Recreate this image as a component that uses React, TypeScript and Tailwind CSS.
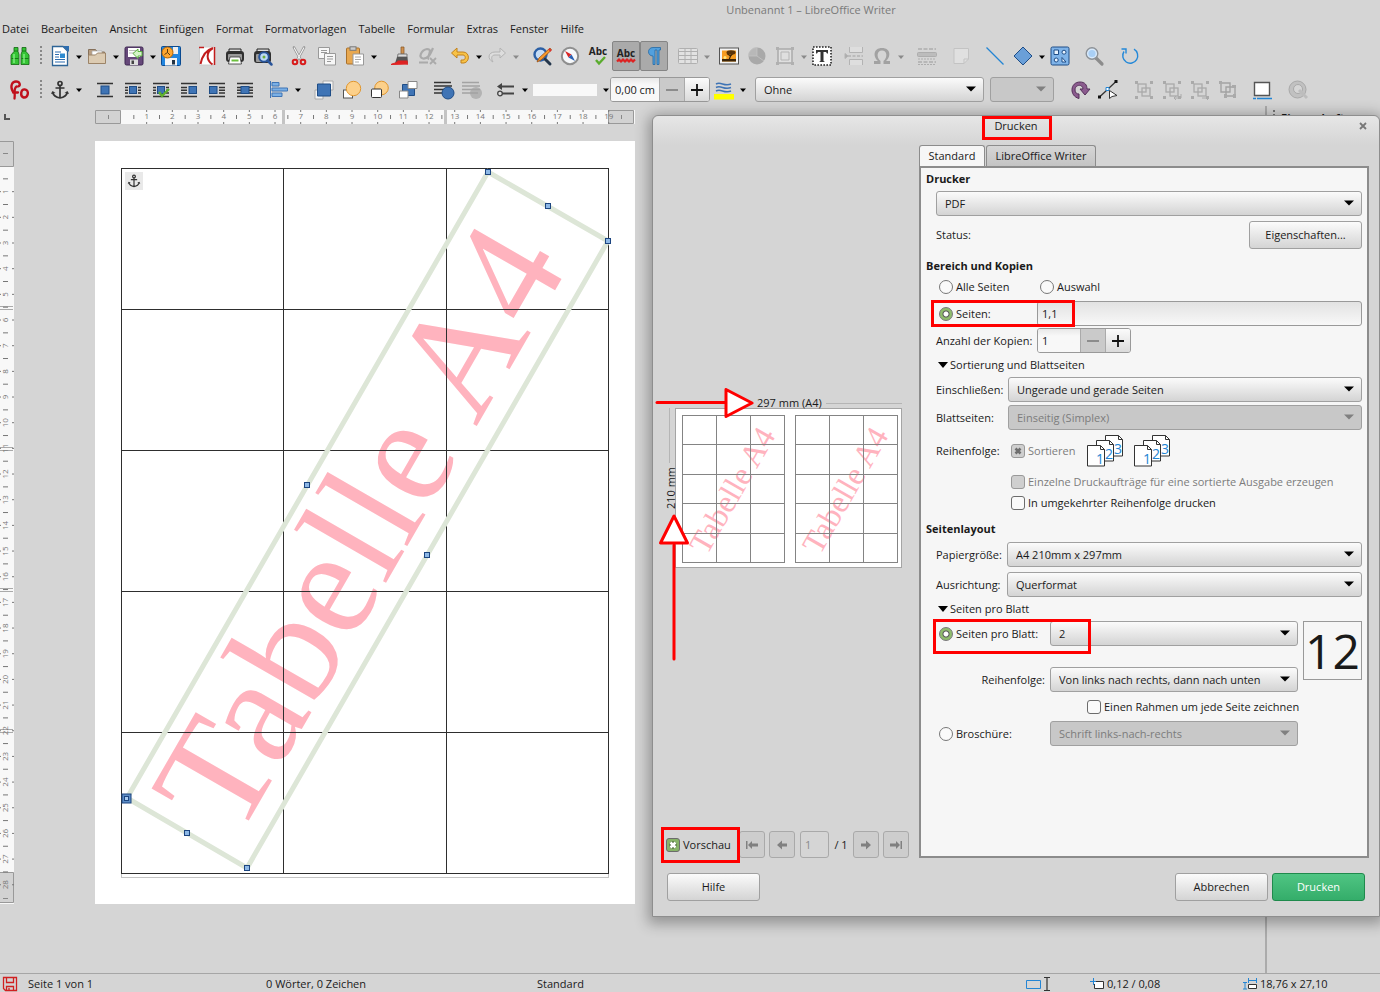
import React from 'react';
import clsx from 'clsx';

type IconName = keyof typeof ICONS;

const blue = '#3f74b5';
const navy = '#1f4d86';

/* 20x20 toolbar drawings */
const wrapLines = (left: boolean, right: boolean) => (
  <>
    <path d="M2 3.5h16M2 16.5h16" stroke="#333" strokeWidth="1.6" />
    {left && <path d="M2 7.5h3M2 10.2h3M2 13h3" stroke="#333" strokeWidth="1.4" />}
    {right && <path d="M15 7.5h3M15 10.2h3M15 13h3" stroke="#333" strokeWidth="1.4" />}
  </>
);

const groupShape = (
  <>
    <rect x="4" y="4" width="8" height="8" fill="none" stroke="#aaa" strokeWidth="1.3" />
    <rect x="8" y="8" width="8" height="8" fill="none" stroke="#aaa" strokeWidth="1.3" />
    <path d="M1 1h3v3H1zM16 1h3v3h-3zM1 16h3v3H1zM16 16h3v3h-3z" fill="#aaa" />
  </>
);

const ICONS = {
  binoculars: (
    <g fill="#35c435" stroke="#116611" strokeWidth="0.8">
      <path d="M4 1.5h4v4l1 3v10H1V9l3-3.5zM12 1.5h4v4L19 9v9.5h-8v-10l1-3z" />
      <path d="M1.5 12.5h7M11.5 12.5h7M4 5h4M12 5h4" fill="none" />
      <path d="M4 8v9M14 8v9" stroke="#8cf08c" strokeWidth="1.3" />
    </g>
  ),
  newDoc: (
    <>
      <path d="M2.5.5H13l4.5 4.5v14.5h-15z" fill="#fff" stroke="#2d6496" strokeWidth="1.3" />
      <path d="M13 0l6 0v6z" fill="#2d6db0" />
      <path d="M5 6h6M5 8.5h4M5 11h4M5 13.5h10M5 16h10" stroke="#2d6db0" strokeWidth="1.2" />
      <rect x="10" y="7.5" width="5" height="4.5" fill="#2d8ad0" />
    </>
  ),
  open: (
    <>
      <path d="M1.5 17V3.5h7l2 2.5h7V17z" fill="#b89d80" stroke="#85705a" />
      <path d="M5 5h10v6H5z" fill="#fff" stroke="#aaa" strokeWidth="0.7" />
      <path d="M1.5 17.5V9h7l2-2h8v10.5z" fill="#dccbb2" stroke="#9c8468" />
    </>
  ),
  save: (
    <>
      <rect x="1" y="1" width="18" height="18" rx="1.5" fill="#66487a" stroke="#3c2650" />
      <path d="M4 2h12v9H4z" fill="#fff" />
      <path d="M5 4.5h7M5 7h5" stroke="#bbb" />
      <path d="M6 13.5h8V19H6z" fill="#ddd" />
      <path d="M7.5 14.5H10V18H7.5z" fill="#444" />
      <path d="M9 7.500L14 3v2.500h4v4.500h-4v2.500z" fill="#d5f5c8" stroke="#5cb040" />
    </>
  ),
  saveRemote: (
    <>
      <rect x=".5" y=".5" width="19" height="19" rx="1" fill="#2286e0" stroke="#0a4a90" />
      <path d="M12 1h5v7h-5z" fill="#eee" />
      <path d="M4 12h12v7.5H4z" fill="#f4f4f4" />
      <path d="M11 14h3v4.5h-3z" fill="#234" />
      <circle cx="6.500" cy="6.500" r="5.5" fill="#ffa730" stroke="#b86200" />
      <path d="M6.5 3v3.500L3.500 8.500M6.500 6.500L9 9" stroke="#5b3a10" strokeWidth="1" fill="none" />
    </>
  ),
  pdf: (
    <>
      <path d="M2.5 1h15v18h-15z" fill="#fff" stroke="#ccc" />
      <path d="M2 1.5h5M17.500 1v18" stroke="#c21d1d" strokeWidth="1.5" />
      <path d="M16 2C9 4 5 11 3.500 18M15.500 2.500C9 6 9 14 15.500 18.500" fill="none" stroke="#c21d1d" strokeWidth="2" />
    </>
  ),
  print: (
    <>
      <path d="M4 3h12v5H4z" fill="#ddd" stroke="#222" />
      <rect x="1" y="5" width="18" height="11" rx="3" fill="#303030" />
      <rect x="3" y="8" width="14" height="6" rx="1" fill="#9a9a9a" />
      <path d="M5 11h10l1.5 7h-13z" fill="#fff" stroke="#333" strokeWidth="0.8" />
      <path d="M6.5 14.500h7" stroke="#6cbf3e" strokeWidth="2" />
    </>
  ),
  printPreview: (
    <>
      <path d="M4 3h12v5H4z" fill="#ddd" stroke="#222" />
      <rect x="1" y="5" width="17" height="12" rx="3" fill="#303030" />
      <rect x="3" y="8" width="13" height="8" rx="1" fill="#9a9a9a" />
      <circle cx="11" cy="11" r="4.8" fill="#bcd9f5" stroke="#28549a" strokeWidth="2" />
      <path d="M14.5 14.500l4 4" stroke="#28549a" strokeWidth="2.5" strokeLinecap="round" />
      <circle cx="11" cy="11" r="1.5" fill="#6cae3e" />
    </>
  ),
  cut: (
    <>
      <path d="M5 1.5l6.500 12M15 1.500L8.500 13.500" stroke="#8f8f8f" strokeWidth="2.6" strokeLinecap="round" />
      <path d="M5 1.5l6.500 12M15 1.500L8.500 13.500" stroke="#f5f5f5" strokeWidth="1.1" />
      <circle cx="6" cy="16" r="2.300" fill="none" stroke="#d81c1c" strokeWidth="2" />
      <circle cx="14" cy="16" r="2.300" fill="none" stroke="#d81c1c" strokeWidth="2" />
    </>
  ),
  copy: (
    <g fill="#f7f7f7" stroke="#999">
      <path d="M1.5 1.5h11v11h-11z" />
      <path d="M7.5 7.500h11V19h-11z" />
      <path d="M4 4.500h6M4 6.500h6M10 10.500h6M10 13h6M10 15.500h4" />
    </g>
  ),
  paste: (
    <>
      <rect x="1.5" y="2" width="13" height="16" rx="1" fill="#e8a850" stroke="#a9702a" />
      <rect x="5" y=".8" width="6" height="3.5" fill="#ccc" stroke="#777" />
      <path d="M8 8h10.500v11H8z" fill="#fff" stroke="#999" />
      <path d="M10 11h6M10 13.500h6M10 16h4" stroke="#aaa" />
    </>
  ),
  brush: (
    <>
      <path d="M11 1h3v7h-3z" fill="#cf9150" stroke="#85531f" strokeWidth="0.7" />
      <path d="M8 8h9v3H7.500z" fill="#ddd" stroke="#777" />
      <path d="M7 11h10.500l.5 6.500H5z" fill="#555" />
      <path d="M8 14.500h9.500l.500 3H5z" fill="#d22" />
      <path d="M1 18.500c6-3 10-1.500 17-.5z" fill="#e22" stroke="#d22" />
    </>
  ),
  clear: (
    <>
      <path d="M15 2C12 9 10 13 5 12.500 0 12 3 4 9 3c4 0 3 3 2 6-1 2-1 4 0 4" fill="none" stroke="#aaa" strokeWidth="2.2" />
      <path d="M1 16.500h9M12 12l6 6M18 12l-6 6" stroke="#aaa" strokeWidth="1.8" />
    </>
  ),
  undo: <path d="M7 2L1.500 7 7 12V9h6c3 0 3 5 0 5h-2v3h3c6-1 6-11-1-11H7z" fill="#f8c246" stroke="#c2821c" />,
  redo: <path d="M13 2l5.500 5-5.500 5V9H8c-4 0-4 4-2 7C0 13 1 6 8 6h5z" fill="#ddd" stroke="#b3b3b3" />,
  find: (
    <>
      <circle cx="8.500" cy="8.500" r="6" fill="#c5dcf5" stroke="#2b5fa5" strokeWidth="2.4" />
      <path d="M13 13l5 5" stroke="#24364c" strokeWidth="3" strokeLinecap="round" />
      <path d="M18 2L7 12l-2 4 4-2L19.500 4z" fill="#f79a2b" stroke="#9d4f12" strokeWidth="0.8" />
      <path d="M17 3l2 2" stroke="#d33" strokeWidth="2" />
    </>
  ),
  compass: (
    <>
      <circle cx="10" cy="10" r="8.200" fill="#f6f8fa" stroke="#8f8f8f" strokeWidth="2" />
      <path d="M5 5l6.500 3.500-3 3z" fill="#d92626" />
      <path d="M15 15l-6.500-3.500 3-3z" fill="#2b62b5" />
    </>
  ),
  spell: (
    <>
      <text x="10" y="9" textAnchor="middle" fontSize="10" fontWeight="700" fill="#222">Abc</text>
      <path d="M8 14l3 3.500L17 11" fill="none" stroke="#5aac2e" strokeWidth="2.4" />
    </>
  ),
  autoSpell: (
    <>
      <text x="10" y="11" textAnchor="middle" fontSize="10" fontWeight="700" fill="#222">Abc</text>
      <path d="M1 15.500l2-2 2 2 2-2 2 2 2-2 2 2 2-2 2 2 2-2" fill="none" stroke="#d22" strokeWidth="2.2" />
    </>
  ),
  pilcrow: (
    <path d="M16.500 1.500H9c-6 0-6 8.500 0 8.500v8.500h2V4h2v14.500h2V4h1.500z" fill="#52a0de" stroke="#2569a5" strokeWidth="0.8" />
  ),
  table: (
    <g stroke="#b0b0b0" fill="#e2e2e2">
      <rect x=".5" y="2.500" width="19" height="15" rx="1" />
      <path d="M.5 5.500h19M.5 9.500h19M.5 13.500h19M7 2.500v15M13 2.500v15" />
    </g>
  ),
  image: (
    <>
      <rect x=".5" y="2" width="19" height="16" fill="#f4f4f4" stroke="#555" />
      <path d="M3 4.500h14v11H3z" fill="#f59b20" />
      <path d="M3 13h14v2.500H3z" fill="#3b2408" />
      <path d="M10 14l1.500-4L8 7.500M11.500 10l3-3.500" fill="none" stroke="#3b2408" strokeWidth="1.2" />
      <ellipse cx="12" cy="6.500" rx="4.500" ry="2.200" fill="#5b3408" />
      <circle cx="6" cy="11.500" r="1.500" fill="#ffe477" />
    </>
  ),
  chart: (
    <>
      <circle cx="10" cy="10" r="8.500" fill="#a9a9a9" />
      <path d="M10 10V1.500A8.500 8.500 0 0 0 1.500 10zM10 10l7 5" fill="#b8b8b8" stroke="#c4c4c4" strokeWidth="0.8" />
    </>
  ),
  frame: (
    <>
      <path d="M3 3h14v14H3z" fill="#dfdfdf" stroke="#aaa" strokeWidth="1.5" />
      <path d="M6 6h8v8H6z" fill="none" stroke="#b5b5b5" />
      <path d="M1 1h3v3H1zM16 1h3v3h-3zM1 16h3v3H1zM16 16h3v3h-3z" fill="#b0b0b0" />
    </>
  ),
  textbox: (
    <>
      <rect x="1" y="1" width="18" height="18" fill="#fff" stroke="#222" strokeWidth="1.6" strokeDasharray="1.6 1.4" />
      <path d="M4 4h12v3.500h-1l-1-1.500h-2.500v9l1.500 1H7l1.500-1V6H6L5 7.500H4z" fill="#333" />
    </>
  ),
  pageBreak: (
    <g stroke="#b3b3b3" fill="#dedede">
      <path d="M5.500 1v5.500h13V1M5.500 19v-5.500h13V19" />
      <path d="M4 10h15" strokeDasharray="3 1.5" strokeWidth="1.5" />
      <path d="M1 7.500L4 10l-3 2.500z" fill="#aaa" />
    </g>
  ),
  omega: (
    <path d="M2 18v-3h4C1 11 1 2 10 2s9 9 4 13h4v3h-6.500v-3C16 11 15 4.500 10 4.500S4 11 8.500 15v3z" fill="#a2a2a2" />
  ),
  header: (
    <g stroke="#adadad" fill="none">
      <path d="M1 3h18M1 16h18" strokeWidth="1.5" strokeDasharray="4 1.5" />
      <rect x=".5" y="6.500" width="19" height="4" rx="1" fill="#bcbcbc" />
      <path d="M1 13h18M1 18.500h18" strokeDasharray="2 1" />
    </g>
  ),
  note: <path d="M3 2.500h14.500V13L13 17.500H3zM13 17.500V13h4.500" fill="#e0e0e0" stroke="#c3c3c3" />,
  line: <path d="M1.500 1.500l17 17" stroke="#2385d4" strokeWidth="1.3" />,
  diamond: <path d="M10 1l9 9-9 9-9-9z" fill="#6a9fd8" stroke={navy} />,
  shapes: (
    <>
      <rect x="1" y="1" width="18" height="18" rx="1.5" fill="#7fb3e8" stroke={navy} />
      <g fill="#eaf4ff" stroke={navy}>
        <path d="M4 4h4.500v4.500H4zM12 11.500l4 4.500h-4z" />
        <circle cx="14" cy="6.200" r="2" />
        <circle cx="6.200" cy="14" r="2" />
      </g>
    </>
  ),
  zoom: (
    <>
      <path d="M12 12l6 6" stroke="#8c8c8c" strokeWidth="3.2" strokeLinecap="round" />
      <circle cx="8" cy="7.500" r="5.800" fill="#d7e9fb" stroke="#8c9197" strokeWidth="1.4" />
      <circle cx="8" cy="7.500" r="3.600" fill="#a9cff5" />
    </>
  ),
  refresh: (
    <>
      <path d="M14 3.200A7.500 7.500 0 1 1 4 5.500" fill="none" stroke="#2388d8" strokeWidth="1.4" />
      <path d="M1.500 3H6v4.500" fill="none" stroke="#2388d8" strokeWidth="1.4" />
    </>
  ),
  fontwork: (
    <g fill="none" stroke="#c0101c" strokeLinecap="round">
      <path d="M2.500 11C0 6 2 1.500 6 1.500c4 0 5 4 2 5M6.500 6.500C3 9 5.500 14 4.500 18.500M3 12.500h5" strokeWidth="2.3" />
      <path d="M15 9.500c-4.500-1-5 7-1.500 8 5 .500 6-7.500 1.500-8z" strokeWidth="2.4" />
    </g>
  ),
  anchor: (
    <g fill="none" stroke="#333" strokeWidth="1.7">
      <circle cx="10" cy="3.500" r="2" />
      <path d="M10 5.500V18M5.500 8h9M2.500 12c1 4 4 5.500 7.500 6 3.500-.5 6.500-2 7.500-6" />
      <path d="M1 14l1.500-3 3 2zM19 14l-1.500-3-3 2z" fill="#333" stroke="none" />
    </g>
  ),
  wrapNone: (<>{wrapLines(false, false)}<rect x="6" y="6" width="8" height="8" fill={blue} stroke={navy} /></>),
  wrapPage: (<>{wrapLines(true, true)}<rect x="6.500" y="6.500" width="7" height="7" fill={blue} stroke={navy} /></>),
  wrapOptimal: (
    <>
      {wrapLines(true, true)}
      <rect x="6.500" y="6.500" width="7" height="7" fill={blue} stroke={navy} />
      <path d="M8 12l3 4 7-7" fill="none" stroke="#5db02d" strokeWidth="2.4" />
    </>
  ),
  wrapLeft: (
    <>
      {wrapLines(false, false)}
      <path d="M2 7.500h6M2 10.200h6M2 13h6" stroke="#333" strokeWidth="1.4" />
      <rect x="10" y="6.500" width="7.500" height="7" fill={blue} stroke={navy} />
    </>
  ),
  wrapRight: (
    <>
      {wrapLines(false, false)}
      <path d="M12 7.500h6M12 10.200h6M12 13h6" stroke="#333" strokeWidth="1.4" />
      <rect x="2.500" y="6.500" width="7.500" height="7" fill={blue} stroke={navy} />
    </>
  ),
  wrapThrough: (
    <>
      <path d="M2 3.500h16M2 16.500h16M2 7.500h16M2 10.200h16M2 13h16" stroke="#333" strokeWidth="1.4" />
      <rect x="6" y="6.500" width="8" height="7" fill={blue} stroke={navy} />
    </>
  ),
  align: (
    <g fill="#7ab0e6" stroke={blue}>
      <path d="M1.500 1v17" />
      <path d="M3 2.500h7v3.500H3zM3 8h15.500v3H3zM3 13h10v3.500H3z" />
    </g>
  ),
  toFront: (
    <>
      <path d="M9 1h10v9H9zM1 10h8v9H1z" fill="#f4f4f4" stroke="#aaa" />
      <path d="M3.500 4h13v12h-13z" fill={blue} stroke={navy} />
    </>
  ),
  forward: (
    <>
      <rect x="1.500" y="10" width="9" height="8" fill="#fff" stroke="#555" />
      <circle cx="11.500" cy="8.500" r="7.200" fill="#fcd08a" stroke="#e0962e" />
    </>
  ),
  backward: (
    <>
      <circle cx="11.500" cy="8" r="6.800" fill="#fcd08a" stroke="#e0962e" />
      <rect x="1.500" y="9" width="10" height="8.500" rx="1" fill="#fff" stroke="#333" />
    </>
  ),
  toBack: (
    <>
      <path d="M4.500 4.500h12v11h-12z" fill={blue} stroke={navy} />
      <path d="M10 1.500h9v7h-9zM1.500 11h8.500v7H1.500z" fill="#fff" stroke="#888" />
    </>
  ),
  foreground: (
    <>
      <path d="M0 2.500h17M0 6h18M0 9.500h18M0 13h10" stroke="#333" strokeWidth="1.7" />
      <circle cx="14" cy="13" r="6" fill={blue} stroke={navy} />
    </>
  ),
  background: (
    <>
      <circle cx="14" cy="13" r="6" fill="#b3b3b3" />
      <path d="M0 2.500h17M0 6h18M0 9.500h18M0 13h16" stroke="#a3a3a3" strokeWidth="1.7" />
    </>
  ),
  lineEnds: (
    <>
      <path d="M3 6.500h15M5 13.500h13" stroke="#444" strokeWidth="2.2" />
      <path d="M1 6.500L6 3v7z" fill="#444" />
      <circle cx="4" cy="13.500" r="2.300" fill="#ddd" stroke="#444" strokeWidth="1.3" />
    </>
  ),
  lineColor: (
    <>
      <path d="M2 4c5-3 8 3 15 0M2 7.500c5-3 8 3 15 0M2 11c5-3 8 3 15 0" fill="none" stroke={blue} strokeWidth="1.5" />
      <path d="M0 14h20v5.500H0z" fill="#ff0" />
    </>
  ),
  rotate: (
    <path d="M9 18.500C-1 16 0 2 10 2c5 0 7 3 7 7h3l-5 6-5-6h3c0-5-8-5-8 1 0 3 2 4 4 4z" fill="#8b5b8e" stroke="#55305a" />
  ),
  points: (
    <>
      <path d="M1.500 17L18 1.500" stroke="#333" strokeWidth="1.3" />
      <path d="M0 15.500h3v3H0zM16.500 0h3v3h-3z" fill="#111" />
      <path d="M8 7.500h3v3H8z" fill="#fff" stroke="#2385d4" />
      <path d="M11.500 10.500v8l2.500-2 5-1z" fill="#fff" stroke="#333" />
    </>
  ),
  group: groupShape,
  ungroup: (<>{groupShape}<path d="M19 14v4h-7M14 16l-2 2 2 2" fill="none" stroke="#aaa" /></>),
  enterGroup: (<>{groupShape}<path d="M12 18h7M17 16l2 2-2 2" fill="none" stroke="#aaa" /></>),
  exitGroup: (
    <g fill="none" stroke="#a3a3a3" strokeWidth="1.4">
      <path d="M3 3h9v9H3zM8 7h9v9H8z" />
      <path d="M1 1h3v3H1zM14 5h4v3h-4zM6 14h3v4H6zM15 14h3v4h-3z" fill="#aaa" stroke="none" />
    </g>
  ),
  label: (
    <>
      <path d="M2.500 2.500h15v13h-15z" fill="#fff" stroke="#555" strokeWidth="1.4" />
      <path d="M1 18.500h3M5 18.500h15" stroke="#2385d4" strokeWidth="1.6" />
    </>
  ),
  properties: (
    <>
      <circle cx="9.500" cy="9.500" r="8.500" fill="#c1c1c1" stroke="#a9a9a9" />
      <circle cx="10" cy="9" r="4.500" fill="#d6d6d6" stroke="#a9a9a9" />
      <path d="M11 10l8 8" stroke="#bdbdbd" strokeWidth="3" />
    </>
  ),
};

function Icon({ name, className = 'size-5' }: { name: IconName; className?: string }) {
  return (
    <svg viewBox="0 0 20 20" className={clsx('shrink-0 overflow-visible', className)} aria-hidden="true">
      {ICONS[name]}
    </svg>
  );
}

function Tool({ name, pressed }: { name: IconName; pressed?: boolean }) {
  return (
    <button
      type="button"
      aria-label={name}
      aria-pressed={pressed}
      className={clsx(
        'flex h-[30px] w-7 shrink-0 items-center justify-center',
        pressed && 'rounded-xs border border-[#858585] bg-[#aaaaaa]'
      )}
    >
      <Icon name={name} />
    </button>
  );
}

function Caret({ dim }: { dim?: boolean }) {
  return (
    <svg viewBox="0 0 9 5" className={clsx('mt-0.5 h-[5px] w-[9px] shrink-0', dim ? 'text-[#8a8a8a]' : 'text-black')} aria-hidden="true">
      <path d="M2 0.5h6L5 4z" fill="currentColor" />
    </svg>
  );
}

function Grip() {
  return <div className="mx-1 h-5 w-1 shrink-0 bg-[repeating-linear-gradient(#888_0_2px,transparent_2px_4px)] bg-[length:2px_100%] bg-right bg-no-repeat" />;
}

const MENUS = ['Datei', 'Bearbeiten', 'Ansicht', 'Einfügen', 'Format', 'Formatvorlagen', 'Tabelle', 'Formular', 'Extras', 'Fenster', 'Hilfe'];

/* '>' is a drop-down arrow, '<' a dimmed one, numbers are gaps */
type Entry = IconName | '>' | '<' | '|' | 4 | 6 | 8 | 12;

const GAPS = { 4: 'w-1', 6: 'w-1.5', 8: 'w-2', 12: 'w-3' };

const STANDARD_BAR: Entry[] = [
  'binoculars', '|', 'newDoc', '>', 'open', '>', 'save', '>', 'saveRemote', 8,
  'pdf', 'print', 'printPreview', 8, 'cut', 'copy', 'paste', '>', 8, 'brush', 'clear', 4,
  'undo', '>', 'redo', '<', 8, 'find', 'compass', 'spell', 'autoSpell', 'pilcrow', 6,
  'table', '<', 4, 'image', 'chart', 'frame', '<', 'textbox', 4, 'pageBreak', 'omega', '<', 8,
  'header', 6, 'note', 6, 'line', 'diamond', '>', 'shapes', 6, 'zoom', 8, 'refresh',
];

const DRAW_BAR: Entry[] = [
  'fontwork', '|', 'anchor', '>', 8, 'wrapNone', 'wrapPage', 'wrapOptimal', 'wrapLeft', 'wrapRight', 'wrapThrough', 6,
  'align', '>', 8, 'toFront', 'forward', 'backward', 'toBack', 8, 'foreground', 'background', 6, 'lineEnds', '>',
];

const DRAW_BAR_END: Entry[] = [
  12, 'rotate', 'points', 8, 'group', 'ungroup', 'enterGroup', 'exitGroup', 6, 'label', 8, 'properties',
];

function Entries({ items }: { items: Entry[] }) {
  return (
    <>
      {items.map((item, i) => {
        if (typeof item === 'number') return <div key={i} className={clsx('shrink-0', GAPS[item])} />;
        if (item === '>' || item === '<') return <Caret key={i} dim={item === '<'} />;
        if (item === '|') return <Grip key={i} />;
        return <Tool key={i} name={item} pressed={item === 'autoSpell' || item === 'pilcrow'} />;
      })}
    </>
  );
}

const raised = 'border border-[#a0a0a0] rounded-[3px] bg-linear-to-b from-[#fbfbfb] to-[#d4d4d4]';

interface DropDownProps {
  value: string;
  label?: string;
  id?: string;
  disabled?: boolean;
  className?: string;
}

function DropDown({ value, label, id, disabled, className }: DropDownProps) {
  return (
    <div className={clsx('relative flex h-[25px]', className)}>
      <select
        id={id}
        aria-label={label}
        disabled={disabled}
        className={clsx(
          'w-full appearance-none px-2 opacity-100',
          disabled ? 'rounded-[3px] border border-[#a0a0a0] bg-[#c8c8c8] text-[#7c7c7c]' : raised
        )}
      >
        <option>{value}</option>
      </select>
      <svg
        viewBox="0 0 10 6"
        className={clsx('pointer-events-none absolute top-[9px] right-2 h-1.5 w-2.5', disabled ? 'text-[#808080]' : 'text-black')}
        aria-hidden="true"
      >
        <path d="M0 0.5h10L5 5.5z" fill="currentColor" />
      </svg>
    </div>
  );
}

function Spin({ id, value, label, className }: { id?: string; value: string; label?: string; className?: string }) {
  return (
    <div className={clsx('flex h-[25px] shrink-0 overflow-hidden rounded-[3px] border border-[#999] bg-[#f6f6f6]', className)}>
      <input id={id} aria-label={label} defaultValue={value} className="w-0 min-w-0 flex-1 bg-linear-to-b from-[#e8e8e8] to-[#f8f8f8] to-30% pl-1" />
      <button type="button" aria-label="Verringern" className="flex w-[25px] items-center justify-center border-l border-[#aaa] bg-[#cacaca]">
        <svg viewBox="0 0 12 12" className="size-3"><path d="M0 6h12" stroke="#777" strokeWidth="1.5" /></svg>
      </button>
      <button type="button" aria-label="Erhöhen" className="flex w-[25px] items-center justify-center border-l border-[#aaa] bg-linear-to-b from-[#fbfbfb] to-[#dadada]">
        <svg viewBox="0 0 12 12" className="size-3"><path d="M0 6h12M6 0v12" stroke="#111" strokeWidth="1.8" /></svg>
      </button>
    </div>
  );
}

function Radio({ label, name, checked, className }: { label: string; name: string; checked?: boolean; className?: string }) {
  return (
    <label className={clsx('flex shrink-0 items-center gap-[3px] whitespace-nowrap', className)}>
      <input
        type="radio"
        name={name}
        defaultChecked={checked}
        className="size-3.5 shrink-0 appearance-none rounded-full border border-[#777] bg-[#fafafa] checked:bg-[radial-gradient(circle,#fff_2px,#555_3px,#8fbc6c_4px)]"
      />
      {label}
    </label>
  );
}

function Check({ label, checked, disabled, className }: { label: string; checked?: boolean; disabled?: boolean; className?: string }) {
  return (
    <label className={clsx('flex shrink-0 items-center gap-[3px] whitespace-nowrap', disabled && 'text-[#7c7c7c]', className)}>
      <span className="relative flex">
        <input
          type="checkbox"
          defaultChecked={checked}
          disabled={disabled}
          className={clsx(
            'size-3.5 appearance-none rounded-[3px] border',
            disabled ? 'border-[#999] bg-[#cfcfcf]' : 'border-[#6c6c6c] bg-[#fafafa] checked:bg-[#87b368]'
          )}
        />
        {checked && (
          <svg viewBox="0 0 14 14" className="pointer-events-none absolute inset-0 size-3.5" aria-hidden="true">
            {!disabled && <path d="M4.500 4.500l5 5M9.500 4.500l-5 5" stroke="#4d6b3b" strokeWidth="4.5" />}
            <path d="M4.500 4.500l5 5M9.500 4.500l-5 5" stroke={disabled ? '#6e6e6e' : '#fff'} strokeWidth="2.6" />
          </svg>
        )}
      </span>
      {label}
    </label>
  );
}

function Highlight({ className }: { className: string }) {
  return <div className={clsx('pointer-events-none absolute border-[3px] border-[#f00]', className)} />;
}

/* Rotated art text, in table coordinates */
function ArtText() {
  return (
    <svg viewBox="0 0 488 706" className="pointer-events-none absolute inset-0 size-full overflow-visible" aria-label="Tabelle A4">
      <text transform="translate(116 673) rotate(-60)" fontSize="153" fill="#ffb3be" className="font-['Liberation_Serif',serif]">
        Tabelle A4
      </text>
    </svg>
  );
}

const HANDLES = [[367, 4], [427, 38], [487, 73], [306, 387], [126, 700], [66, 665], [186, 317]];

function Selection() {
  return (
    <svg viewBox="0 0 488 706" className="pointer-events-none absolute inset-0 size-full overflow-visible" aria-hidden="true">
      <path d="M6 630L367 4l120 69-361 627z" fill="none" stroke="#dde6d7" strokeWidth="5" />
      {HANDLES.map(([x, y]) => (
        <rect key={`${x}-${y}`} x={x - 2.5} y={y - 2.5} width="5" height="5" fill="#8db8e6" stroke="#1c4580" />
      ))}
      <rect x="1" y="626" width="9" height="9" fill="#5c8cc5" stroke="#1c4580" />
      <rect x="3.5" y="628.5" width="4" height="4" fill="#a9cbef" stroke="#1c4580" />
    </svg>
  );
}

function Grid({ cell, anchor }: { cell: string; anchor?: boolean }) {
  return (
    <table className="relative size-full table-fixed border-collapse">
      <tbody>
        {[0, 1, 2, 3, 4].map((r) => (
          <tr key={r} className="h-1/5">
            {[0, 1, 2].map((c) => (
              <td key={c} className={clsx('border p-0 align-top', cell)}>
                {anchor && r === 0 && c === 0 && (
                  <button type="button" aria-label="Anker" className="m-[3px] flex size-[18px] items-center justify-center bg-[#e9e9e9]">
                    <Icon name="anchor" className="size-3.5" />
                  </button>
                )}
              </td>
            ))}
          </tr>
        ))}
      </tbody>
    </table>
  );
}

const CM = 25.67;

function HorizontalRuler() {
  return (
    <svg viewBox="0 0 540 14" className="h-3.5 w-[540px] shrink-0" aria-hidden="true">
      <path d="M0 0h540v14H0z" fill="#f8f8f8" />
      <path d="M.5.5h25v13H.5zM513.5.5h25v13h-25z" fill="#d2d2d2" stroke="#999" />
      <path d="M187 0h3v14h-3zM349 0h3v14h-3z" fill="#c4c4c4" />
      {Array.from({ length: 19 }, (_, i) => (
        <g key={i}>
          <path d={`M${26 + CM * (i + 0.5)} 5v4M${26 + CM * (i + 1)} 0v2M${26 + CM * (i + 1)} 12v2`} stroke="#777" />
          <text x={26 + CM * (i + 1)} y="9" textAnchor="middle" fontSize="8" fill="#777">{i + 1}</text>
        </g>
      ))}
      <path d="M13.5 5v4M526.500 5v4" stroke="#888" />
    </svg>
  );
}

function VerticalRuler() {
  return (
    <svg viewBox="0 0 14 763" className="h-[763px] w-3.5 shrink-0" aria-hidden="true">
      <path d="M0 0h14v763H0z" fill="#f8f8f8" />
      <path d="M-1 .5h14.5v25H-1zM-1 731.5h14.5v30H-1z" fill="#d2d2d2" stroke="#999" />
      <path d="M0 165.5h13M0 168.500h13M0 306.500h13M0 309.500h13M0 447.500h13M0 450.500h13M0 588.500h13M0 591.500h13" stroke="#aaa" />
      {Array.from({ length: 28 }, (_, i) => {
        const y = 25 + CM * (i + 1);
        return (
          <g key={i}>
            <path d={`M3 ${y - CM / 2}h5M0 ${y}h1M12 ${y}h2`} stroke="#777" />
            <text transform={`translate(8 ${y}) rotate(-90)`} textAnchor="middle" fontSize="8" fill="#777">{i + 1}</text>
          </g>
        );
      })}
      <path d="M3 12.5h5M3 757.500h5" stroke="#888" />
    </svg>
  );
}

function PagesIcon() {
  const sheets = [
    { x: 18, y: 0, n: 3 },
    { x: 9, y: 5, n: 2 },
    { x: 0, y: 10, n: 1 },
  ];
  return (
    <svg viewBox="0 0 36 32" className="h-8 w-9 shrink-0" aria-hidden="true">
      {sheets.map(({ x, y, n }) => (
        <g key={n} transform={`translate(${x} ${y})`}>
          <path d="M.5.5h13l4 4v16.500H.5z" fill="#fff" stroke="#333" />
          <path d="M13.5.5v4h4" fill="none" stroke="#333" />
          <text x="9" y="19" fontSize="14" fill="#2385d4">{n}</text>
        </g>
      ))}
    </svg>
  );
}

function NavButton({ label, d }: { label: string; d: string }) {
  return (
    <button type="button" aria-label={label} disabled className="flex h-[27px] w-[26px] shrink-0 items-center justify-center rounded-[3px] border border-[#a9a9a9] bg-[#cdcdcd]">
      <svg viewBox="0 0 12 10" className="h-2.5 w-3"><path d={d} fill="#808080" /></svg>
    </button>
  );
}

function PreviewPane() {
  return (
    <div className="flex w-[266px] shrink-0 flex-col">
      <div className="flex flex-1 items-center pl-[22px]">
        <div className="relative h-[160px] w-[227px]">
          <div className="absolute -top-[11px] left-0 flex w-full items-center gap-1 pl-[82px] leading-3">
            297 mm (A4)
            <div className="h-px flex-1 bg-[#b5b5b5]" />
          </div>
          <div className="absolute inset-y-0 -left-2.5 flex w-3 items-center justify-center">
            <div className="absolute top-0 left-1 h-[55px] w-px bg-[#b5b5b5]" />
            <span className="-rotate-90 leading-3 whitespace-nowrap">210 mm</span>
          </div>
          <div className="flex h-full gap-2.5 border border-[#a5a5a5] bg-white pt-1.5 pr-[3px] pb-1 pl-1.5">
            {[1, 2].map((n) => (
              <div key={n} className="relative flex-1">
                <ArtText />
                <Grid cell="border-[#848484]" />
              </div>
            ))}
          </div>
          <svg viewBox="0 0 100 274" className="pointer-events-none absolute -top-5 -left-5 h-[274px] w-[100px]" aria-hidden="true">
            <g stroke="#f00" strokeWidth="3" strokeLinejoin="round" strokeLinecap="round">
              <path d="M2 14.500h68" />
              <path d="M71 1.500v27l26-13.500z" fill="#fff" />
              <path d="M19 157v114" />
              <path d="M19 128L5.500 155h27z" fill="#fff" />
            </g>
          </svg>
        </div>
      </div>
      <div className="relative flex h-[27px] items-center pl-[13px]">
        <Check label="Vorschau" checked className="w-[73px]" />
        <NavButton label="Erste Seite" d="M0 1h1.5v8H0zM2 5l4-4v2.5h6v3H6V9z" />
        <div className="w-1" />
        <NavButton label="Vorherige Seite" d="M1 5l5-4.5v3h5v3H6v3z" />
        <input aria-label="Seite" disabled defaultValue="1" className="ml-[5px] h-[27px] w-[29px] rounded-[3px] border border-[#a9a9a9] pl-1 text-[#8a8a8a]" />
        <span className="w-6 text-center">/ 1</span>
        <NavButton label="Nächste Seite" d="M11 5L6 .5v3H1v3h5v3z" />
        <div className="w-1" />
        <NavButton label="Letzte Seite" d="M12 1h-1.5v8H12zM10 5L6 1v2.5H0v3h6V9z" />
        <Highlight className="-top-1 left-2 h-9 w-[79px]" />
      </div>
    </div>
  );
}

function Expander({ label }: { label: string }) {
  return (
    <button type="button" className="flex h-6 items-center gap-0.5 pl-3">
      <svg viewBox="0 0 10 6" className="h-1.5 w-2.5"><path d="M0 0h10L5 6z" /></svg>
      {label}
    </button>
  );
}

function PrintSettings() {
  return (
    <div className="flex min-w-0 flex-1 flex-col">
      <div className="flex h-[21px] items-end gap-px">
        <button type="button" className="h-[21px] w-[66px] rounded-t-[3px] border border-b-0 border-[#8c8c8c] bg-[#f6f6f6]">Standard</button>
        <button type="button" className="h-[21px] w-[110px] rounded-t-[3px] border border-b-0 border-[#8c8c8c] bg-linear-to-b from-[#d6d6d6] to-[#c4c4c4]">LibreOffice Writer</button>
      </div>
      <div className="border-2 border-[#8c8c8c] bg-[#f6f6f6] px-[5px] pb-[110px]">
        <h2 className="flex h-[22px] items-center font-bold">Drucker</h2>
        <div className="pl-2.5">
          <DropDown label="Drucker" value="PDF" className="mt-px" />
          <div className="mt-px flex h-9 items-center justify-between">
            <span>Status:</span>
            <button type="button" className={clsx('h-7 w-[113px]', raised)}>Eigenschaften...</button>
          </div>
        </div>

        <h2 className="flex h-[26px] items-center font-bold">Bereich und Kopien</h2>
        <div className="pl-2.5">
          <div className="flex h-4 items-center pl-[3px]">
            <Radio name="range" label="Alle Seiten" className="w-[101px]" />
            <Radio name="range" label="Auswahl" />
          </div>
          <div className="relative mt-1.5 flex h-[25px] items-center pl-[3px]">
            <Radio name="range" label="Seiten:" checked className="w-[98px]" />
            <input aria-label="Seitenbereich" defaultValue="1,1" className="h-[25px] min-w-0 flex-1 rounded-[3px] border border-[#999] bg-linear-to-b from-[#e2e2e2] to-[#f8f8f8] pl-1" />
            <Highlight className="-top-px -left-[5px] h-[27px] w-[144px]" />
          </div>
          <div className="mt-0.5 flex h-[25px] items-center">
            <label htmlFor="copies" className="w-[101px] shrink-0 whitespace-nowrap">Anzahl der Kopien:</label>
            <Spin id="copies" value="1" className="w-[94px]" />
          </div>
        </div>
        <Expander label="Sortierung und Blattseiten" />
        <div className="pl-2.5">
          <div className="flex items-center">
            <label htmlFor="include" className="w-[72px] shrink-0">Einschließen:</label>
            <DropDown id="include" value="Ungerade und gerade Seiten" className="flex-1" />
          </div>
          <div className="mt-[3px] flex items-center">
            <label htmlFor="sides" className="w-[72px] shrink-0">Blattseiten:</label>
            <DropDown id="sides" value="Einseitig (Simplex)" disabled className="flex-1" />
          </div>
          <div className="flex h-[42px] items-center">
            <span className="w-[75px] shrink-0">Reihenfolge:</span>
            <Check label="Sortieren" checked disabled className="w-[76px]" />
            <PagesIcon />
            <div className="w-[11px]" />
            <PagesIcon />
          </div>
          <Check label="Einzelne Druckaufträge für eine sortierte Ausgabe erzeugen" disabled className="h-5 pl-[75px]" />
          <Check label="In umgekehrter Reihenfolge drucken" className="h-[22px] pl-[75px]" />
        </div>

        <h2 className="flex h-7 items-center pt-0.5 font-bold">Seitenlayout</h2>
        <div className="pl-2.5">
          <div className="flex items-center">
            <label htmlFor="paper" className="w-[71px] shrink-0">Papiergröße:</label>
            <DropDown id="paper" value="A4 210mm x 297mm" className="flex-1" />
          </div>
          <div className="mt-[5px] flex items-center">
            <label htmlFor="orientation" className="w-[71px] shrink-0">Ausrichtung:</label>
            <DropDown id="orientation" value="Querformat" className="flex-1" />
          </div>
        </div>
        <Expander label="Seiten pro Blatt" />
        <div className="flex gap-[5px] pl-[13px]">
          <div className="min-w-0 flex-1">
            <div className="relative flex h-[25px] items-center">
              <Radio name="layout" label="Seiten pro Blatt:" checked className="w-[111px]" />
              <DropDown label="Seiten pro Blatt" value="2" className="flex-1" />
              <Highlight className="-top-0.5 -left-1.5 h-[35px] w-[158px]" />
            </div>
            <div className="mt-[21px] flex items-center">
              <label htmlFor="order" className="w-[111px] shrink-0 pr-[5px] text-right">Reihenfolge:</label>
              <DropDown id="order" value="Von links nach rechts, dann nach unten" className="flex-1" />
            </div>
            <Check label="Einen Rahmen um jede Seite zeichnen" className="h-[29px] pl-[148px]" />
            <div className="flex items-center">
              <Radio name="layout" label="Broschüre:" className="w-[111px]" />
              <DropDown label="Broschüre" value="Schrift links-nach-rechts" disabled className="flex-1" />
            </div>
          </div>
          <div className="flex h-[59px] w-[59px] shrink-0 items-center justify-center border border-[#999] text-[48px] leading-none">
            12
          </div>
        </div>
      </div>
    </div>
  );
}

function PrintDialog() {
  return (
    <section
      role="dialog"
      aria-label="Drucken"
      className="absolute top-[9px] right-0 w-[728px] rounded-t-md border border-[#8e8e8e] bg-[#d5d5d5] shadow-[0_3px_14px_4px_rgba(0,0,0,0.3)]"
    >
      <header className="relative flex h-[29px] items-start justify-center rounded-t-md bg-linear-to-b from-[#e6e6e6] to-[#d5d5d5]">
        <h1 className="relative px-3 pt-0.5 leading-4">
          Drucken
          <Highlight className="-right-0.5 left-0 top-0 h-6" />
        </h1>
        <button type="button" aria-label="Schließen" className="absolute top-1.5 right-3">
          <svg viewBox="0 0 8 8" className="size-2"><path d="M1 1l6 6M7 1L1 7" stroke="#777" strokeWidth="1.8" /></svg>
        </button>
      </header>
      <div className="flex pr-2.5">
        <PreviewPane />
        <PrintSettings />
      </div>
      <footer className="flex gap-1 px-3.5 py-[15px]">
        <button type="button" className={clsx('mr-auto h-7 w-[93px]', raised)}>Hilfe</button>
        <button type="button" className={clsx('h-7 w-[93px]', raised)}>Abbrechen</button>
        <button type="button" className="h-7 w-[93px] rounded-[3px] border border-[#1f8a4c] bg-linear-to-b from-[#4fc583] to-[#34ad6a] text-white">Drucken</button>
      </footer>
    </section>
  );
}

function StatusBar() {
  return (
    <footer className="flex h-[19px] shrink-0 items-center border-t border-[#a6a6a6] pt-0.5 whitespace-nowrap">
      <svg viewBox="0 0 16 16" className="ml-0.5 size-4" aria-hidden="true">
        <g fill="none" stroke="#d02020" strokeWidth="1.3">
          <path d="M1.5 1.5h13v13h-11l-2-2zM4.500 1.500v5h7v-5M4.500 14.500v-4h7v4M7 12v2" />
        </g>
      </svg>
      <span className="w-[238px] pl-2.5">Seite 1 von 1</span>
      <span className="w-[281px] pl-2.5">0 Wörter, 0 Zeichen</span>
      <span className="flex-1">Standard</span>
      <div className="flex w-[64px] items-center gap-[3px]">
        <svg viewBox="0 0 24 14" className="h-3.5 w-6" aria-hidden="true">
          <path d="M.5 3.500h14v8H.5z" fill="none" stroke="#2385d4" />
          <path d="M18 .5h6M21 .5v13M18 13.500h6" stroke="#333" strokeWidth="1.2" />
        </svg>
      </div>
      <div className="flex w-[153px] items-center gap-[3px]">
        <svg viewBox="0 0 14 12" className="h-3 w-3.5" aria-hidden="true">
          <path d="M3.500 3.500h10v7h-9V6" fill="#fff" stroke="#333" />
          <path d="M0 3.500h6M3.500 0v7" stroke="#2385d4" />
        </svg>
        0,12 / 0,08
      </div>
      <div className="flex w-[137px] items-center gap-[3px]">
        <svg viewBox="0 0 14 12" className="h-3 w-3.5" aria-hidden="true">
          <path d="M5.500 6.500h8v4h-8z" fill="#fff" stroke="#333" />
          <path d="M5 2.500h9M5.500 0v5M13.500 0v5M0 4.500h4M0 11h4M2 4.500V11" stroke="#2385d4" />
        </svg>
        18,76 x 27,10
      </div>
    </footer>
  );
}

export default function App() {
  return (
    <div className="flex min-h-screen flex-col overflow-hidden bg-[#d5d5d5] font-['Open_Sans','Noto_Sans',sans-serif] text-[11px] leading-4 text-[#1a1a1a]">
      <div className="h-5 pt-0.5 pl-[242px] text-center text-[#7a7a7a]">Unbenannt 1 – LibreOffice Writer</div>
      <nav className="flex h-[19px] items-center gap-3 pb-0.5 pl-0.5">
        {MENUS.map((menu) => (
          <button key={menu} type="button">{menu}</button>
        ))}
      </nav>

      <div className="flex h-[34px] shrink-0 items-center pl-1.5">
        <Entries items={STANDARD_BAR} />
      </div>
      <div className="flex h-[33px] shrink-0 items-center pl-1.5">
        <Entries items={DRAW_BAR} />
        <div className="mx-1 h-3 w-16 shrink-0 bg-[#f8f8f8]" />
        <Caret />
        <Spin value="0,00 cm" label="Linienbreite" className="w-[100px]" />
        <Tool name="lineColor" />
        <Caret />
        <div className="w-2 shrink-0" />
        <DropDown label="Füllung" value="Ohne" className="w-[229px] shrink-0" />
        <div className="w-1.5 shrink-0" />
        <DropDown label="Farbe" value="" disabled className="w-16 shrink-0" />
        <Entries items={DRAW_BAR_END} />
      </div>

      <main className="relative flex flex-1 pb-[69px]">
        <div className="flex-1">
          <div className="flex h-[35px] items-start pt-1">
            <div className="flex w-[95px] shrink-0 pt-1 pl-1">
              <div className="size-1.5 border-b-2 border-l-2 border-[#555]" />
            </div>
            <HorizontalRuler />
          </div>
          <div className="flex gap-[81px]">
            <VerticalRuler />
            <div className="h-[763px] w-[540px] shrink-0 bg-white px-[26px] pt-[27px]">
              <div className="relative h-[706px]">
                <ArtText />
                <Grid cell="border-[#2e2e2e]" anchor />
                <Selection />
              </div>
              <div className="h-1 border border-t-0 border-[#c4c4c4]" />
            </div>
          </div>
        </div>
        <aside className="-mb-[69px] flex w-[115px] items-start gap-1.5 border-l-2 border-[#ababab] pt-1 pl-1.5 font-bold">
          <span className="h-4 w-0.5 bg-[repeating-linear-gradient(#777_0_2px,transparent_2px_4px)]" />
          Eigenschaften
        </aside>
        <PrintDialog />
      </main>

      <StatusBar />
    </div>
  );
}
